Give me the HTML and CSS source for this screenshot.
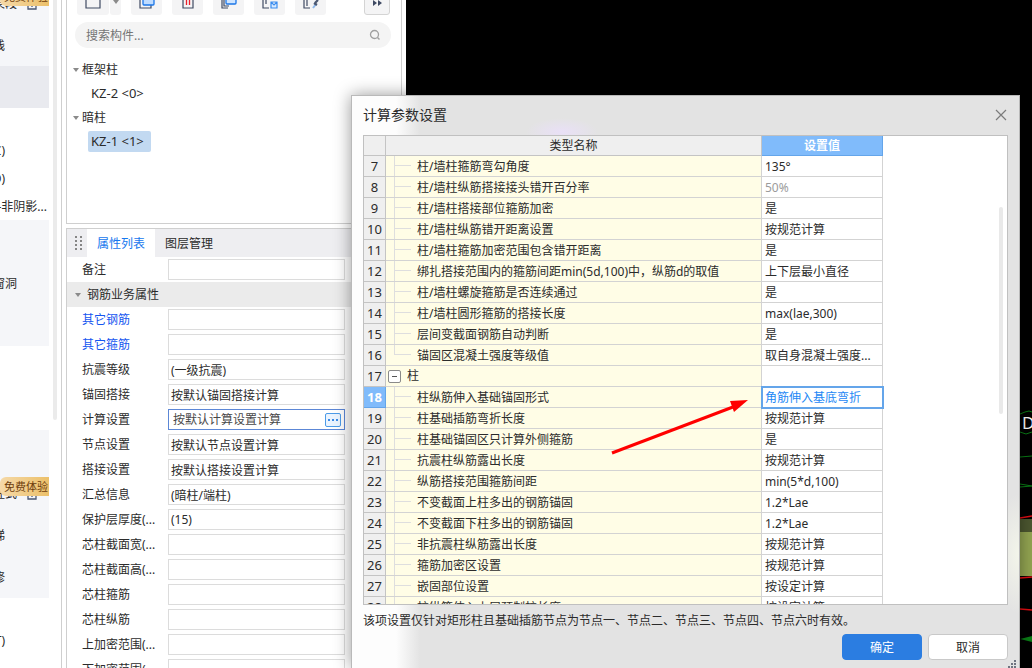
FILE: index.html
```html
<!DOCTYPE html>
<html lang="zh-CN">
<head>
<meta charset="utf-8">
<title>计算参数设置</title>
<link rel="stylesheet" href="styles.css">
</head>
<body>
<div class="app">
  <nav class="modules">
    <ul class="module-list">
      <li class="group tint">
        <a href="#" class="mod tall"><span>梁段</span><svg class="lock" viewBox="0 0 10 12"><path d="M3 5V2.500a2 2 0 0 1 4 0V5M1 5h8v6H1zM5 7v2" fill="none" stroke="#4b5872" stroke-width="1.300"/></svg><b class="trial">免费体验</b></a>
        <a href="#" class="mod tall short"><span>栈</span></a>
        <a href="#" class="mod tall active"></a>
      </li>
      <li class="group">
        <a href="#" class="mod"></a>
        <a href="#" class="mod short"><span>(C)</span></a>
        <a href="#" class="mod short"><span>(D)</span></a>
        <a href="#" class="mod long"><span>柱-非阴影...</span></a>
      </li>
      <li class="group tint">
        <a href="#" class="mod tall"></a>
        <a href="#" class="mod tall"><span>窗洞</span></a>
        <a href="#" class="mod tall"></a>
      </li>
      <li class="group">
        <a href="#" class="mod"></a>
        <a href="#" class="mod"></a>
        <a href="#" class="mod"></a>
      </li>
      <li class="group tint">
        <a href="#" class="mod tall"></a>
        <a href="#" class="mod tall"><span>柱式</span><svg class="lock" viewBox="0 0 10 12"><path d="M3 5V2.500a2 2 0 0 1 4 0V5M1 5h8v6H1zM5 7v2" fill="none" stroke="#4b5872" stroke-width="1.300"/></svg><b class="trial">免费体验</b></a>
        <a href="#" class="mod tall short"><span>梯</span></a>
        <a href="#" class="mod tall short"><span>修</span></a>
      </li>
      <li class="group">
        <a href="#" class="mod"></a>
        <a href="#" class="mod short"><span>(T)</span></a>
        <a href="#" class="mod"></a>
      </li>
    </ul>
    <div class="rail"><div class="rail-thumb"></div></div>
  </nav>

  <div class="side">
    <section class="components">
      <div class="toolbar">
        <div class="split">
          <button class="tool" aria-label="新建"><svg viewBox="0 0 20 20"><path d="M3 2h14v16H3z" fill="none" stroke="#3f4a63" stroke-width="1.200"/></svg></button>
          <button class="tool drop" aria-label="更多新建"><i class="caret"></i></button>
        </div>
        <button class="tool" aria-label="复制"><svg viewBox="0 0 20 20"><path d="M3 4h11v14H3z" fill="none" stroke="#3f4a63" stroke-width="1.200"/><rect x="6" y="3" width="11" height="12" rx="1" fill="#bfdcff" stroke="#1b76e8" stroke-width="1.300"/></svg></button>
        <button class="tool" aria-label="删除"><svg viewBox="0 0 20 20"><path d="M5 3v15h10V3" fill="none" stroke="#3f4a63" stroke-width="1.200"/><path d="M8.500 4v11M11.500 4v11" stroke="#e8202c" stroke-width="1.300"/></svg></button>
        <button class="tool" aria-label="层间复制"><svg viewBox="0 0 20 20"><path d="M3 3v15h6M5 3v13h5" fill="none" stroke="#3f4a63" stroke-width="1.200"/><rect x="7" y="2" width="10" height="12" rx="1" fill="#cfe5ff" stroke="#1b76e8" stroke-width="1.300"/></svg></button>
        <button class="tool" aria-label="存档"><svg viewBox="0 0 20 20"><path d="M3 2v16h6M6 2v12M11 8h1M15 8h1" fill="none" stroke="#3f4a63" stroke-width="1.200"/><path d="M11 12h6v6h-6zM11 12l3 3 3-3" fill="#d8eaff" stroke="#3a8df0" stroke-width="1.200"/></svg></button>
        <button class="tool" aria-label="提取"><svg viewBox="0 0 20 20"><path d="M3 2v16h6M6 2v14M12 8h1M16 8h1" fill="none" stroke="#3f4a63" stroke-width="1.200"/><path d="M12 18l3-4" stroke="#8fb8ea" stroke-width="2"/><path d="M13 13l3 2M14 13l3-3" stroke="#4b5872" stroke-width="2.200"/></svg></button>
        <button class="tool more" aria-label="展开"><svg viewBox="0 0 20 20"><path d="M6 10l4 3-4 3zM11 10l4 3-4 3z" fill="#3f4a63"/></svg></button>
      </div>
      <label class="search">
        <input type="text" placeholder="搜索构件..." aria-label="搜索构件">
        <svg viewBox="0 0 12 12"><circle cx="5.500" cy="5.500" r="4" fill="none" stroke="#a0a0a0" stroke-width="1.300"/><path d="M8.500 8.500l2 2" stroke="#a0a0a0" stroke-width="1.500"/></svg>
      </label>
      <ul class="tree">
        <li class="node"><i class="caret"></i>框架柱</li>
        <li class="leaf"><span>KZ-2 &lt;0&gt;</span></li>
        <li class="node"><i class="caret"></i>暗柱</li>
        <li class="leaf"><span class="picked">KZ-1 &lt;1&gt;</span></li>
      </ul>
    </section>

    <section class="props">
      <div class="tabs">
        <svg class="grip" viewBox="0 0 8 16"><path d="M0 1h2M5 1h2M0 5h2M5 5h2M0 9h2M5 9h2M0 13h2M5 13h2" stroke="#858585" stroke-width="2"/></svg>
        <button class="tab on">属性列表</button>
        <button class="tab">图层管理</button>
      </div>
      <div class="prop"><label for="p1">备注</label><input id="p1" type="text"></div>
      <div class="prop-head"><i class="caret"></i>钢筋业务属性</div>
      <div class="prop link"><label for="p2">其它钢筋</label><input id="p2" type="text"></div>
      <div class="prop link"><label for="p3">其它箍筋</label><input id="p3" type="text"></div>
      <div class="prop"><label for="p4">抗震等级</label><input id="p4" type="text" value="(一级抗震)"></div>
      <div class="prop"><label for="p5">锚固搭接</label><input id="p5" type="text" value="按默认锚固搭接计算"></div>
      <div class="prop"><label for="p6">计算设置</label><div class="editing"><input id="p6" type="text" value="按默认计算设置计算"><button class="dots" aria-label="编辑计算设置"><svg viewBox="0 0 14 12"><path d="M2 6h2M6 6h2M10 6h2" stroke="#3b8ae6" stroke-width="2"/></svg></button></div></div>
      <div class="prop"><label for="p7">节点设置</label><input id="p7" type="text" value="按默认节点设置计算"></div>
      <div class="prop"><label for="p8">搭接设置</label><input id="p8" type="text" value="按默认搭接设置计算"></div>
      <div class="prop"><label for="p9">汇总信息</label><input id="p9" type="text" value="(暗柱/端柱)"></div>
      <div class="prop"><label for="p10">保护层厚度(...</label><input id="p10" type="text" value="(15)"></div>
      <div class="prop"><label for="p11">芯柱截面宽(...</label><input id="p11" type="text"></div>
      <div class="prop"><label for="p12">芯柱截面高(...</label><input id="p12" type="text"></div>
      <div class="prop"><label for="p13">芯柱箍筋</label><input id="p13" type="text"></div>
      <div class="prop"><label for="p14">芯柱纵筋</label><input id="p14" type="text"></div>
      <div class="prop"><label for="p15">上加密范围(...</label><input id="p15" type="text"></div>
      <div class="prop"><label for="p16">下加密范围(...</label><input id="p16" type="text"></div>
    </section>
  </div>

  <main class="canvas">
    <svg class="model" viewBox="0 0 12 268">
      <path d="M0 14l5-2 4-1 3 1M0 32l6 2 6-2M0 57l12-1M0 84l12 2M0 87l12-1" fill="none" stroke="#0a7d16"/>
      <path d="M0 239l12-3v6z" fill="#0a7d16"/>
      <path d="M0 119h12v13H0z" fill="#4c5730"/>
      <path d="M0 132h12v44H0z" fill="#93a552"/>
      <path d="M0 118l12-2M0 178l12-1M0 209l12 1" stroke="#e00d12" stroke-width="1.300"/>
      <text x="2" y="29" class="axis">D</text>
    </svg>
  </main>

  <div class="dialog" role="dialog" aria-labelledby="dlg-title">
    <header class="dlg-bar">
      <h1 id="dlg-title">计算参数设置</h1>
      <button class="close" aria-label="关闭"><svg viewBox="0 0 12 12"><path d="M1 1l10 10M11 1L1 11" stroke="#7b7b7b" stroke-width="1.200"/></svg></button>
    </header>
    <div class="sheet">
      <table>
        <thead><tr><th class="num"></th><th>类型名称</th><th class="val hot">设置值</th></tr></thead>
        <tbody>
          <tr><th>7</th><td class="name">柱/墙柱箍筋弯勾角度</td><td>135°</td></tr>
          <tr><th>8</th><td class="name">柱/墙柱纵筋搭接接头错开百分率</td><td class="dim">50%</td></tr>
          <tr><th>9</th><td class="name">柱/墙柱搭接部位箍筋加密</td><td>是</td></tr>
          <tr><th>10</th><td class="name">柱/墙柱纵筋错开距离设置</td><td>按规范计算</td></tr>
          <tr><th>11</th><td class="name">柱/墙柱箍筋加密范围包含错开距离</td><td>是</td></tr>
          <tr><th>12</th><td class="name">绑扎搭接范围内的箍筋间距min(5d,100)中，纵筋d的取值</td><td>上下层最小直径</td></tr>
          <tr><th>13</th><td class="name">柱/墙柱螺旋箍筋是否连续通过</td><td>是</td></tr>
          <tr><th>14</th><td class="name">柱/墙柱圆形箍筋的搭接长度</td><td>max(lae,300)</td></tr>
          <tr><th>15</th><td class="name">层间变截面钢筋自动判断</td><td>是</td></tr>
          <tr><th>16</th><td class="name end">锚固区混凝土强度等级值</td><td>取自身混凝土强度...</td></tr>
          <tr><th>17</th><td class="branch"><div><button class="fold" aria-label="折叠"></button>柱</div></td><td></td></tr>
          <tr><th class="hot">18</th><td class="name">柱纵筋伸入基础锚固形式</td><td class="focus">角筋伸入基底弯折</td></tr>
          <tr><th>19</th><td class="name">柱基础插筋弯折长度</td><td>按规范计算</td></tr>
          <tr><th>20</th><td class="name">柱基础锚固区只计算外侧箍筋</td><td>是</td></tr>
          <tr><th>21</th><td class="name">抗震柱纵筋露出长度</td><td>按规范计算</td></tr>
          <tr><th>22</th><td class="name">纵筋搭接范围箍筋间距</td><td>min(5*d,100)</td></tr>
          <tr><th>23</th><td class="name">不变截面上柱多出的钢筋锚固</td><td>1.2*Lae</td></tr>
          <tr><th>24</th><td class="name">不变截面下柱多出的钢筋锚固</td><td>1.2*Lae</td></tr>
          <tr><th>25</th><td class="name">非抗震柱纵筋露出长度</td><td>按规范计算</td></tr>
          <tr><th>26</th><td class="name">箍筋加密区设置</td><td>按规范计算</td></tr>
          <tr><th>27</th><td class="name">嵌固部位设置</td><td>按设定计算</td></tr>
          <tr><th>28</th><td class="name">柱纵筋伸入上层预制柱长度</td><td>按设定计算</td></tr>
        </tbody>
      </table>
      <div class="sheet-thumb"></div>
    </div>
    <p class="hint">该项设置仅针对矩形柱且基础插筋节点为节点一、节点二、节点三、节点四、节点六时有效。</p>
    <footer class="actions">
      <button class="btn primary">确定</button>
      <button class="btn">取消</button>
    </footer>
    <svg class="resize" viewBox="0 0 8 8"><path d="M6 1h2M3 4h2M6 4h2M0 7h2M3 7h2M6 7h2" stroke="#6f7480" stroke-width="2"/></svg>
    <svg class="arrow" viewBox="0 0 138 56"><path d="M1 54L122 8" stroke="#f00" stroke-width="3"/><path d="M119 2l18-1-14 12z" fill="#f00"/></svg>
  </div>
</div>
</body>
</html>
```

FILE: styles.css
```css
* { box-sizing: border-box; }
body {
  margin: 0;
  color: #2b2b2b;
  font: 12px/20px "Noto Sans", "Noto Sans CJK SC", sans-serif;
}
button, input { font: inherit; color: inherit; margin: 0; padding: 0; border: 0; background: none; border-radius: 0; }
ul { margin: 0; padding: 0; list-style: none; }
svg { display: block; }
.app { position: relative; display: flex; height: 100vh; overflow: hidden; background: #fff; }

/* module navigation */
.modules { display: flex; gap: 4px; width: 62px; flex: none; border-right: 1px solid #cfcfcf; overflow: hidden; }
.module-list { width: 49px; margin-top: -18px; overflow: hidden; }
.tint { background: #f5f6f9; }
.mod {
  position: relative; display: flex; align-items: center; justify-content: flex-end;
  height: 28px; color: inherit; text-decoration: none; white-space: nowrap; padding: 2px 32px 0 0;
}
.tall { height: 42px; }
.short { padding-right: 44px; }
.long { padding-right: 2px; }
.active { background: #e9eaef; }
.lock { position: absolute; right: 12px; top: 16px; width: 10px; height: 12px; }
.trial {
  position: absolute; right: 0; top: 5px; width: 49px; height: 19px; padding-left: 4px; overflow: hidden;
  border-radius: 6px 0 0 6px; background: linear-gradient(to right, #f5d9a8, #ecc06a); color: #6e3d0c;
  font-size: 11px; font-weight: 400; line-height: 20px;
}
.rail { width: 4px; }
.rail-thumb { height: 420px; background: #ebebeb; border-radius: 0 0 2px 2px; }

/* component list */
.side { display: flex; flex-direction: column; gap: 4px; width: 336px; margin-left: 4px; flex: none; }
.components, .props { border: 1px solid #cfcfcf; overflow: hidden; }
.components { height: 224px; flex: none; border-top: 0; }
.toolbar { display: flex; align-items: flex-end; gap: 10px; height: 15px; padding: 0 11px 0 10px; }
.split { display: flex; gap: 1px; }
.tool { width: 31px; height: 28px; background: #f4f4f5; border-radius: 3px; display: flex; align-items: center; justify-content: center; }
.tool svg { width: 20px; height: 20px; flex: none; margin-bottom: 2px; }
.split .tool { width: 32px; }
.split .drop { width: 11px; padding-top: 2px; }
.more { width: 26px; margin-left: auto; border: 1px solid #d4d4d4; }
.caret { width: 0; height: 0; flex: none; border: 3px solid transparent; border-top: 4px solid #8a8a8a; border-bottom: 0; }
.search {
  display: flex; align-items: center; justify-content: space-between; height: 26px;
  margin: 7px 10px 9px 8px; padding: 0 10px 0 11px; border-radius: 13px; background: #f4f4f4;
}
.search input { flex: 1; min-width: 0; padding-top: 2px; outline: 0; }
.search input::placeholder { color: #757575; opacity: 1; }
.search svg { width: 12px; height: 12px; }
.tree li { display: flex; align-items: center; height: 24px; }
.tree .node { gap: 3px; padding: 2px 0 0 6px; }
.leaf { padding-left: 21px; }
.leaf span { height: 21px; padding: 0 7px 0 3px; border-radius: 2px; font-size: 13px; line-height: 20px; }
.leaf .picked { background: #c2d9f1; }

/* property list */
.props { flex: 1; border-bottom: 0; }
.tabs { display: flex; height: 28px; background: #eeeef1; }
.grip { width: 8px; height: 16px; margin: 7px 4px 0 8px; }
.tab { padding: 2px 10px 0; }
.tab.on { background: #fff; color: #1677ee; }
.prop { display: flex; align-items: center; height: 25px; padding: 0 56px 0 15px; }
.prop label { width: 86px; flex: none; white-space: nowrap; }
.link label { color: #1556f0; }
.prop > input, .editing { flex: 1; min-width: 0; height: 21px; border: 1px solid #dcdcdc; background: #fff; padding: 0 2px; }
.prop .editing { display: flex; align-items: center; border-color: #5c87d6; padding: 0 3px 0 4px; }
.editing input { flex: 1; min-width: 0; height: 19px; color: #484848; }
.dots { width: 16px; height: 14px; border: 1px solid #4c9be8; border-radius: 2px; background: #eaf4ff; }
.prop-head { display: flex; align-items: center; gap: 6px; height: 25px; padding-left: 8px; background: #ebebeb; }

/* drawing area */
.canvas { position: relative; flex: 1; margin-left: 4px; background: #000; }
.model { position: absolute; right: 0; top: 400px; width: 12px; height: 268px; }
.axis { fill: #fff; font: 17px "Noto Sans", sans-serif; }

/* settings dialog */
.dialog {
  position: absolute; left: 351px; right: 12px; top: 95px; bottom: 0;
  display: flex; flex-direction: column; padding: 0 11px 8px;
  border: 1px solid #b9b9b9; border-bottom: 0; box-shadow: 0 0 16px rgba(0, 0, 0, .4);
  background:
    radial-gradient(ellipse 36px 14px at 210px 36px, #e9e0f7, transparent),
    radial-gradient(ellipse 26px 60px at 100% 458px, #f3f5ea, transparent),
    linear-gradient(to right, #fdfdfd 44px, #e3e3e3 68px);
}
.dlg-bar { display: flex; align-items: center; justify-content: space-between; height: 39px; flex: none; padding: 0 1px 2px 0; }
.dlg-bar h1 { margin: 0; font-size: 14px; font-weight: 400; }
.close svg { width: 12px; height: 12px; }
.sheet { position: relative; flex: 1; min-height: 0; overflow: hidden; border: 1px solid #c0c0c0; background: #fff; }
table { width: 519px; table-layout: fixed; border-spacing: 0; }
th, td { height: 21px; padding: 0; border: solid #d3d3d3; border-width: 0 1px 1px 0; font-weight: 400; line-height: 20px; text-align: left; white-space: nowrap; overflow: hidden; }
td { padding: 2px 0 0 3px; line-height: 18px; }
th { background: #efefef; border-color: #c4c4c4; text-align: center; }
thead th { height: 20px; padding-top: 1px; line-height: 18px; }
.num { width: 22px; }
.val { width: 121px; }
tbody th { font-size: 13px; }
.hot { background: #80bbfb; border-color: #64a5ea; color: #fff; font-weight: 700; }
.dim { color: #9b9b9b; }
.name {
  padding-left: 31px;
  background:
    linear-gradient(#dedede, #dedede) 8px 0 / 1px 100% no-repeat,
    linear-gradient(#dedede, #dedede) 9px 9px / 16px 1px no-repeat,
    #fffde6;
}
.name.end { background-size: 1px 10px, 16px 1px, auto; }
.branch { background: #fffde6; padding: 0 0 0 2px; }
.branch div { display: flex; align-items: center; gap: 6px; height: 20px; }
.fold { width: 13px; height: 13px; border: 1px solid #8a8a8a; border-radius: 2px; background: linear-gradient(#555, #555) center / 5px 1px no-repeat #fff; }
.focus { color: #1e88f5; outline: 2px solid #64a5ea; outline-offset: -1px; }
.sheet-thumb { position: absolute; right: 4px; top: 71px; width: 4px; height: 207px; border-radius: 2px; background: #e9e9e9; }
.hint { margin: 6px 0 3px; flex: none; }
.actions { display: flex; justify-content: flex-end; gap: 6px; flex: none; }
.btn { width: 80px; height: 26px; padding-top: 2px; border: 1px solid #c9c9c9; border-radius: 4px; background: #fff; }
.primary { border-color: #2b7de1; background: #2b7de1; color: #fff; }
.resize { position: absolute; right: 3px; bottom: 0; width: 8px; height: 8px; }
.arrow { position: absolute; left: 259px; top: 303px; width: 138px; height: 56px; }
```
